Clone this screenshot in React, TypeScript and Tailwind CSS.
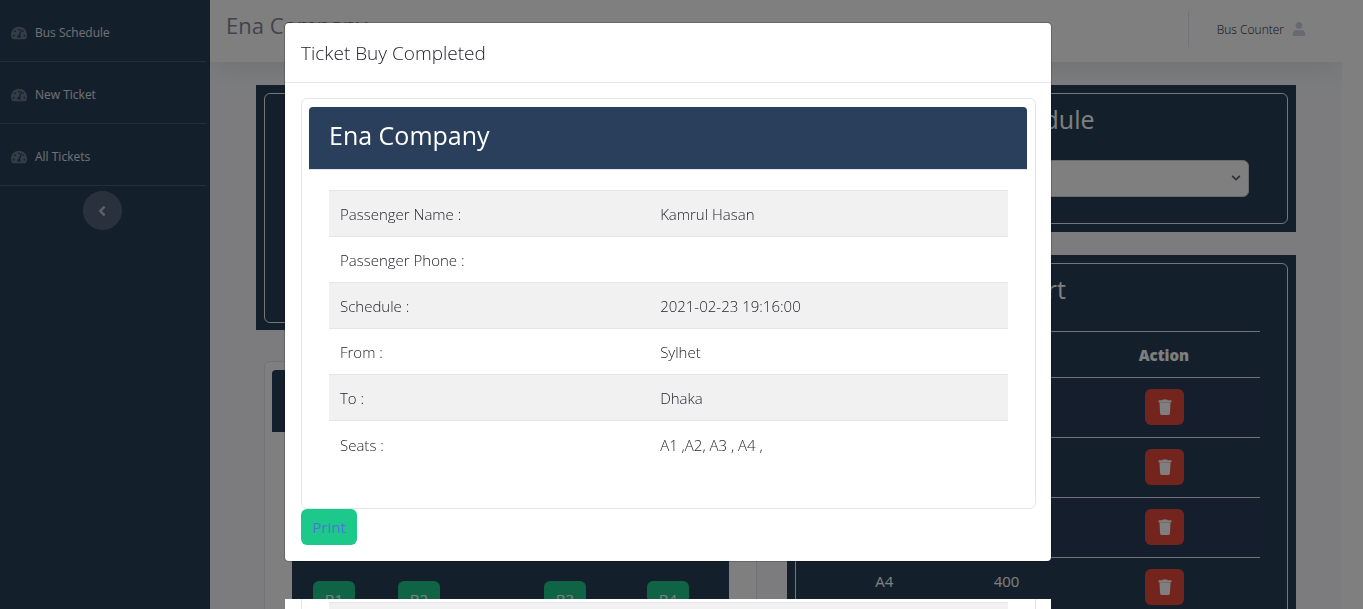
import React from "react";
import { FaAngleLeft, FaChevronDown, FaTachometerAlt, FaUser } from "react-icons/fa";

const navItems = ["Bus Schedule", "New Ticket", "All Tickets"];

const ticket = [
  ["Passenger Name :", "Kamrul Hasan"],
  ["Passenger Phone :", ""],
  ["Schedule :", "2021-02-23 19:16:00"],
  ["From :", "Sylhet"],
  ["To :", "Dhaka"],
  ["Seats :", "A1 ,A2, A3 , A4 ,"],
];

const cart = ["A1", "A2", "A3", "A4"];

function TrashIcon() {
  return (
    <svg viewBox="0 0 14 16" className="h-4 w-[14px]" fill="currentColor" aria-hidden="true">
      <path d="M5 0.4h4l0.7 0.9H13a0.5 0.5 0 0 1 0.5 0.5v1.4H0.5V1.8A0.5 0.5 0 0 1 1 1.3h3.3z" />
      <path d="M1.4 3h11.2v1H1.4z" opacity="0.65" />
      <path d="M1.5 4h11l-0.6 10.6a1.4 1.4 0 0 1-1.4 1.3h-7a1.4 1.4 0 0 1-1.4-1.3z" />
    </svg>
  );
}

function Sidebar() {
  return (
    <nav className="w-[210px] shrink-0 bg-[#293e58]">
      <ul className="mr-1">
        {navItems.map((item) => (
          <li key={item} className="border-b border-white/15">
            <a href="#" className="flex h-[61px] items-center gap-2 pt-1 pl-[11px] text-[12px] text-white/85">
              <FaTachometerAlt className="size-4 text-white/30" />
              <span className="pt-px">{item}</span>
            </a>
          </li>
        ))}
      </ul>
      <div className="mt-[5px] flex justify-center pr-[6px]">
        <button aria-label="Collapse menu" className="flex size-[39px] items-center justify-center rounded-full bg-white/20 text-white/60">
          <FaAngleLeft className="size-4" />
        </button>
      </div>
    </nav>
  );
}

function Topbar() {
  return (
    <header className="flex h-[62px] items-center justify-between bg-white pr-9 pl-4 shadow-[0_2px_28px_0_rgba(58,59,69,0.15)]">
      <h1 className="pb-3 text-[22px] text-[#858796]">Ena Company</h1>
      <div className="mb-[5px] flex h-9 items-center gap-2 border-l border-[#e3e6f0] pl-7">
        <span className="pt-[3px] text-[12px] font-light text-[#24252d]">Bus Counter</span>
        <FaUser className="size-[14px] text-[#d1d3e2]" />
      </div>
    </header>
  );
}

function Panel({ title, children }: { title: string; children?: React.ReactNode }) {
  return (
    <section className="bg-[#293e58] p-2 text-white">
      <div className="rounded-md border border-white/90 px-[27px] pt-[7px]">
        <h2 className="text-center text-[25px] leading-9">{title}</h2>
        {children}
      </div>
    </section>
  );
}

function SeatPlan() {
  return (
    <section className="mx-2 rounded-md border border-[#e3e6f0] bg-white px-[7px] py-2">
      <div className="h-[62px] rounded-t bg-[#293e58]" />
      <div className="mx-5 mt-5 h-[300px] bg-[#293e58] px-[21px] pt-[129px]">
        <div className="flex text-[15px] text-white">
          <button className="mr-[43px] h-9 w-[42px] rounded-md bg-[#1cc88a]">B1</button>
          <button className="mr-auto h-9 w-[42px] rounded-md bg-[#1cc88a]">B2</button>
          <button className="mr-[61px] h-9 w-[42px] rounded-md bg-[#1cc88a]">B3</button>
          <button className="mr-[19px] h-9 w-[42px] rounded-md bg-[#1cc88a]">B4</button>
        </div>
      </div>
    </section>
  );
}

function CartTable() {
  return (
    <table className="mt-6 mb-6 w-full table-fixed text-center text-[15px]">
      <colgroup>
        <col className="w-[28%]" />
        <col className="w-[28%]" />
        <col className="w-[44%]" />
      </colgroup>
      <thead>
        <tr className="h-[46px] border-y border-[#e3e6f0]">
          <th className="pt-0.5 font-extrabold">Seat</th>
          <th className="pt-0.5 font-extrabold">Price</th>
          <th className="pt-0.5 font-extrabold">Action</th>
        </tr>
      </thead>
      <tbody>
        {cart.map((seat) => (
          <tr key={seat} className="h-[60px] border-b border-[#e3e6f0] odd:bg-[#2b3c58]">
            <td className="pb-3">{seat}</td>
            <td className="pb-3">400</td>
            <td className="pb-0.5 pl-0.5">
              <button aria-label={`Remove ${seat}`} className="inline-flex h-9 w-[39px] items-center justify-center rounded-md bg-[#e74a3b] align-middle">
                <TrashIcon />
              </button>
            </td>
          </tr>
        ))}
      </tbody>
    </table>
  );
}

function TicketModal() {
  return (
    <div className="fixed inset-0 overflow-hidden bg-black/50 pt-[23px] pr-[27px]">
      <div role="dialog" aria-modal="true" aria-labelledby="dialog-title" className="mx-auto w-full max-w-[766px] rounded bg-white shadow-[0_0_0_1px_rgba(0,0,0,0.2)]">
        <div className="flex h-[60px] items-center border-b border-[#e3e6f0] px-4 pt-0.5">
          <h2 id="dialog-title" className="text-[19px] font-light text-[#24252d]">Ticket Buy Completed</h2>
        </div>
        <div className="px-4 pt-[15px] pb-4">
          <div className="mr-[-1px] h-[411px] rounded-md border border-[#e3e6f0] pt-2 pr-2 pl-[7px]">
            <h3 className="h-[62px] rounded-t bg-[#2a3f5b] px-5 pt-2 text-[25px] leading-10 text-white">Ena Company</h3>
            <div className="border-t border-[#e3e6f0] pt-5 pr-[19px] pl-5">
              <table className="w-full table-fixed text-[15px] text-[#24252d]">
                <tbody>
                  {ticket.map(([label, value]) => (
                    <tr key={label} className="h-[46px] border-t border-[#e3e6f0] odd:bg-[#f1f1f1]">
                      <th scope="row" className="w-[47%] px-[11px] pt-0.5 text-left font-light">{label}</th>
                      <td className="px-3 pt-0.5 font-light">{value}</td>
                    </tr>
                  ))}
                </tbody>
              </table>
            </div>
          </div>
          <button className="h-9 w-14 rounded-md bg-[#1cc88a] text-[15px] text-[#4e73df]">Print</button>
        </div>
      </div>
      <div className="mx-auto mt-[38px] h-40 w-full max-w-[766px] bg-white px-4">
        <div className="mr-[-1px] h-full border-x border-[#e3e6f0] px-[27px] pt-[3px]">
          <div className="h-[46px] border-y border-[#e3e6f0] bg-[#f1f1f1]" />
        </div>
      </div>
    </div>
  );
}

export default function App() {
  return (
    <div className="flex h-screen overflow-hidden bg-white pr-[21px] font-['Open_Sans','Noto_Sans',sans-serif]">
      <Sidebar />
      <div className="min-w-0 flex-1 overflow-hidden bg-[#f8f9fc]">
        <Topbar />
        <main className="grid grid-cols-2 items-start gap-[22px] px-[46px] pt-[23px]">
          <div>
            <div className="mb-[31px] h-[245px] bg-[#293e58] p-2">
              <div className="h-[230px] rounded-md border border-white/90" />
            </div>
            <SeatPlan />
          </div>
          <div className="flex flex-col gap-[23px]">
            <Panel title="Schedule">
              <div className="relative mx-[11px] mt-[23px] mb-[26px]">
                <select aria-label="Schedule" className="block h-[37px] w-full appearance-none rounded-md border border-[#d1d3e2] bg-white" />
                <FaChevronDown className="pointer-events-none absolute top-[13px] right-2 size-[10px] text-[#5a5c69]" />
              </div>
            </Panel>
            <Panel title="Cart">
              <CartTable />
            </Panel>
          </div>
        </main>
      </div>
      <TicketModal />
    </div>
  );
}
